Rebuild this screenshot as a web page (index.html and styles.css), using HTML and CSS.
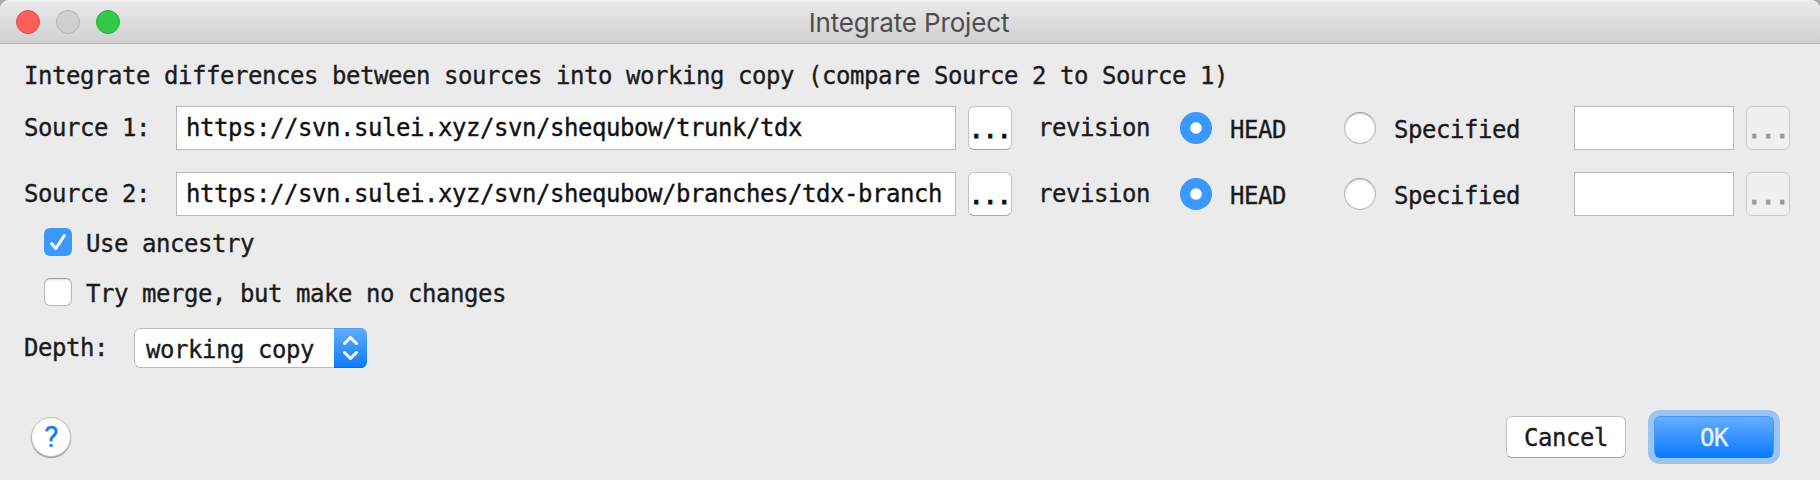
FILE: index.html
```html
<!DOCTYPE html>
<html lang="en">
<head>
<meta charset="utf-8">
<title>Integrate Project</title>
<link rel="stylesheet" href="styles.css">
</head>
<body>
<div class="window">
  <header class="titlebar">
    <div class="lights"><i class="light red"></i><i class="light gray"></i><i class="light green"></i></div>
    <h1 class="title">Integrate Project</h1>
  </header>
  <main class="content">
    <p class="intro">Integrate differences between sources into working copy (compare Source 2 to Source 1)</p>
    <div class="source">
      <span class="label">Source 1:</span>
      <div class="field">https://svn.sulei.xyz/svn/shequbow/trunk/tdx</div>
      <button class="more">...</button>
      <span class="revision">revision</span>
      <i class="radio on"></i><span class="head">HEAD</span>
      <i class="radio"></i><span class="specified">Specified</span>
      <div class="field small"></div>
      <button class="more off">...</button>
    </div>
    <div class="source">
      <span class="label">Source 2:</span>
      <div class="field">https://svn.sulei.xyz/svn/shequbow/branches/tdx-branch</div>
      <button class="more">...</button>
      <span class="revision">revision</span>
      <i class="radio on"></i><span class="head">HEAD</span>
      <i class="radio"></i><span class="specified">Specified</span>
      <div class="field small"></div>
      <button class="more off">...</button>
    </div>
    <div class="option">
      <span class="check on"><svg width="28" height="28" viewBox="0 0 28 28"><path d="M7.500 15.500L12 20.500L20.300 7.500"/></svg></span>
      <span class="option-text">Use ancestry</span>
    </div>
    <div class="option">
      <span class="check"></span>
      <span class="option-text">Try merge, but make no changes</span>
    </div>
    <div class="depth">
      <span class="depth-label">Depth:</span>
      <div class="select">
        <span class="value">working copy</span>
        <span class="arrows"><svg width="33" height="40" viewBox="0 0 33 40"><path d="M10.500 15.500L16.500 9.500L22.500 15.500M10.500 24.500L16.500 30.500L22.500 24.500"/></svg></span>
      </div>
    </div>
  </main>
  <footer class="footer">
    <button class="help">?</button>
    <div class="actions">
      <button class="button">Cancel</button>
      <button class="button primary">OK</button>
    </div>
  </footer>
</div>
</body>
</html>
```
FILE: styles.css
```css
* { box-sizing: border-box; }
body { margin: 0; background: #ababab; }
.window {
  width: 1820px; height: 480px; display: flex; flex-direction: column;
  overflow: hidden; background: #ebebeb; border-radius: 9px 9px 0 0;
  font: 24px/28px "DejaVu Sans Mono", monospace; letter-spacing: -0.449px; color: #1b1b1b;
  -webkit-text-stroke: 0.35px;
}
.window button { font: inherit; letter-spacing: inherit; color: inherit; margin: 0; padding: 0; }
.titlebar {
  height: 44px; flex: none; display: grid; grid-template-columns: 120px 1fr 120px;
  background: linear-gradient(#f4f4f4 0, #e9e9e9 2px, #d1d1d1 42px);
  border-bottom: 1px solid #b1b1b1;
}
.lights { display: flex; gap: 16px; padding: 10px 0 0 16px; }
.light { width: 24px; height: 24px; flex: none; border-radius: 50%; border: 1px solid; }
.red { background: #fc605b; border-color: #df4e4a; }
.gray { background: #d0d0d0; border-color: #b3b3b3; }
.green { background: #34c84a; border-color: #2bac3a; }
.title {
  margin: 0; text-align: center; font: 400 26px/46px Inter, sans-serif;
  letter-spacing: -0.15px; color: #4d4d4d; -webkit-text-stroke: 0; padding-right: 2px;
}
.content { padding: 18px 0 0 24px; }
.intro { margin: 0 0 16px; }
.source { display: flex; height: 44px; margin-bottom: 22px; }
.label { width: 152px; padding-top: 8px; }
.field { width: 780px; height: 44px; flex: none; background: #fff; border: 1px solid #b7b7b7; padding: 7px 0 0 9px; color: #111; }
.field.small { width: 160px; }
.window .more {
  width: 44px; height: 44px; flex: none; margin-left: 12px; padding-top: 3px;
  background: #fff; border: 1px solid #c2c2c2; border-bottom-color: #a6a6a6; border-radius: 6px; color: #111;
  -webkit-text-stroke: 1.2px;
}
.window .more.off { background: #f0f0f0; border-color: #cacaca; color: #999; }
.revision { width: 142px; margin-left: 26px; padding-top: 8px; }
.radio {
  width: 32px; height: 32px; flex: none; margin-top: 6px; border-radius: 50%;
  background: #fff; border: 1px solid #b9b9b9; border-top-color: #999; box-shadow: inset 0 1px 2px #ccc;
}
.radio.on { border: 0; box-shadow: none; background: radial-gradient(circle, #fff 5.2px, #3b98fc 6.2px); }
.head { width: 114px; margin-left: 18px; padding-top: 10px; }
.specified { width: 180px; margin-left: 18px; padding-top: 10px; }
.option { display: flex; gap: 14px; height: 28px; margin: -10px 0 32px 20px; }
.check {
  width: 28px; height: 28px; border-radius: 6px; background: #fff;
  border: 1px solid #b9b9b9; border-top-color: #999; box-shadow: inset 0 1px 2px #ddd;
}
.check.on { border: 0; background: #3b98fc; box-shadow: none; }
.check svg, .arrows svg { display: block; fill: none; stroke: #fff; stroke-width: 3; stroke-linecap: round; stroke-linejoin: round; }
.option-text { padding-top: 2px; }
.depth { display: flex; margin-top: -10px; height: 40px; }
.depth-label { width: 110px; padding-top: 6px; }
.select { display: flex; width: 233px; height: 40px; border-radius: 6px; overflow: hidden; background: #fff; }
.value { width: 200px; padding: 7px 0 0 11px; border: 1px solid #b9b9b9; border-right: 0; border-radius: 6px 0 0 6px; }
.arrows { width: 33px; background: linear-gradient(#63aefc, #0a7afe); box-shadow: inset 0 1px #4c9bf0, inset 0 -1px #0866dd; }
.footer { display: flex; justify-content: space-between; align-items: flex-start; padding: 48px 46px 0 31px; }
.window .help {
  width: 40px; height: 40px; margin-top: 1px; border-radius: 50%; background: #fff;
  border: 1px solid #bdbdbd; box-shadow: 0 1px 1px #999; color: #147cf0;
  font: 30px/38px Roboto, sans-serif; -webkit-text-stroke: 0.3px;
}
.actions { display: flex; gap: 28px; }
.window .button {
  width: 120px; height: 42px; border-radius: 6px; background: #fff; padding-top: 2px;
  border: 1px solid #c2c2c2; border-bottom-color: #a6a6a6;
}
.window .primary {
  border: 1px solid #4597ef; border-bottom-color: #1878f0;
  background: linear-gradient(#64aefd, #0a7aff); box-shadow: 0 0 0 6px #9cc4f3; color: #e9f2fd;
}
```
